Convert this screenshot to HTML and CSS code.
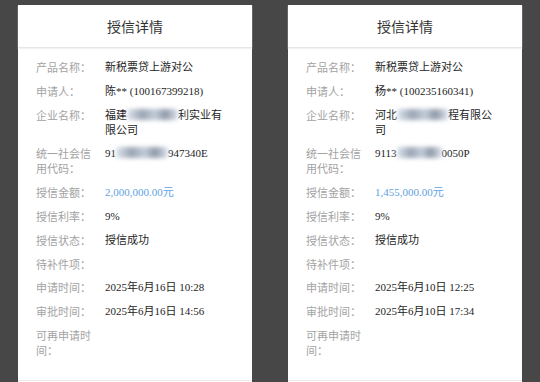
FILE: index.html
```html
<!DOCTYPE html>
<html>
    <head>
        <title>授信详情</title>
        <meta charset="UTF-8">
        <meta name="viewport" content="width=device-width, initial-scale=1.0">
        <link rel="stylesheet" href="styles.css">
    </head>
    <body>
        <div class="page">
            <div class="card">
                <div class="card-head">授信详情</div>
                <div class="card-body">
                    <div class="row"><div class="label">产品名称：</div><div class="value">新税票贷上游对公</div></div>
                    <div class="row"><div class="label">申请人：</div><div class="value">陈** (100167399218)</div></div>
                    <div class="row"><div class="label">企业名称：</div><div class="value">福建<span class="smudge"></span>利实业有限公司</div></div>
                    <div class="row"><div class="label">统一社会信用代码：</div><div class="value">91<span class="smudge code"></span>947340E</div></div>
                    <div class="row"><div class="label">授信金额：</div><div class="value amount">2,000,000.00元</div></div>
                    <div class="row"><div class="label">授信利率：</div><div class="value">9%</div></div>
                    <div class="row"><div class="label">授信状态：</div><div class="value">授信成功</div></div>
                    <div class="row"><div class="label">待补件项：</div><div class="value"></div></div>
                    <div class="row"><div class="label">申请时间：</div><div class="value">2025年6月16日 10:28</div></div>
                    <div class="row"><div class="label">审批时间：</div><div class="value">2025年6月16日 14:56</div></div>
                    <div class="row"><div class="label">可再申请时间：</div><div class="value"></div></div>
                </div>
                <div class="card-foot"></div>
            </div>

            <div class="card">
                <div class="card-head">授信详情</div>
                <div class="card-body">
                    <div class="row"><div class="label">产品名称：</div><div class="value">新税票贷上游对公</div></div>
                    <div class="row"><div class="label">申请人：</div><div class="value">杨** (100235160341)</div></div>
                    <div class="row"><div class="label">企业名称：</div><div class="value">河北<span class="smudge"></span>程有限公司</div></div>
                    <div class="row"><div class="label">统一社会信用代码：</div><div class="value">9113<span class="smudge code-short"></span>0050P</div></div>
                    <div class="row"><div class="label">授信金额：</div><div class="value amount">1,455,000.00元</div></div>
                    <div class="row"><div class="label">授信利率：</div><div class="value">9%</div></div>
                    <div class="row"><div class="label">授信状态：</div><div class="value">授信成功</div></div>
                    <div class="row"><div class="label">待补件项：</div><div class="value"></div></div>
                    <div class="row"><div class="label">申请时间：</div><div class="value">2025年6月10日 12:25</div></div>
                    <div class="row"><div class="label">审批时间：</div><div class="value">2025年6月10日 17:34</div></div>
                    <div class="row"><div class="label">可再申请时间：</div><div class="value"></div></div>
                </div>
                <div class="card-foot"></div>
            </div>
        </div>
    </body>
</html>
```

FILE: styles.css
```css
body{
    margin: 0;
    background-color: #474747;
    overflow: hidden;
}
.page{
    display: flex;
    gap: 36px;
    padding: 5px 18px 0 18px;
}
.card{
    width: 234px;
    background-color: white;
    flex-shrink: 0;
}
.card-head{
    height: 42px;
    line-height: 42px;
    text-align: center;
    font-family: "Noto Sans CJK SC", sans-serif;
    font-size: 14px;
    color: #333;
    border-bottom: 1px solid #e6e6e6;
    box-shadow: 0 1px 1px #f2f2f2;
}
.card-body{
    display: flex;
    flex-direction: column;
    gap: 8.8px;
    padding: 12px 23px 22px 18px;
}
.row{
    display: grid;
    grid-template-columns: 60px 124px;
    column-gap: 9px;
    font-size: 11px;
    line-height: 15px;
    min-height: 15px;
}
.label{
    color: #a3a3a3;
    font-family: "Noto Sans CJK SC", sans-serif;
}
.value{
    color: #1e1e1e;
    font-family: "Liberation Serif", "Noto Sans CJK SC", serif;
}
.amount{
    color: #5ea2e2;
}
.smudge{
    display: inline-block;
    width: 51px;
    height: 11px;
    vertical-align: -1px;
    background: linear-gradient(90deg, #dfe6ef, #9aa4b3 30%, #c3ccd8 55%, #8f98a7 75%, #dde4ee);
    filter: blur(2px);
}
.code{
    width: 52px;
}
.code-short{
    width: 45px;
}
.card-foot{
    height: 40px;
    border-top: 1px solid #ececec;
}
```
